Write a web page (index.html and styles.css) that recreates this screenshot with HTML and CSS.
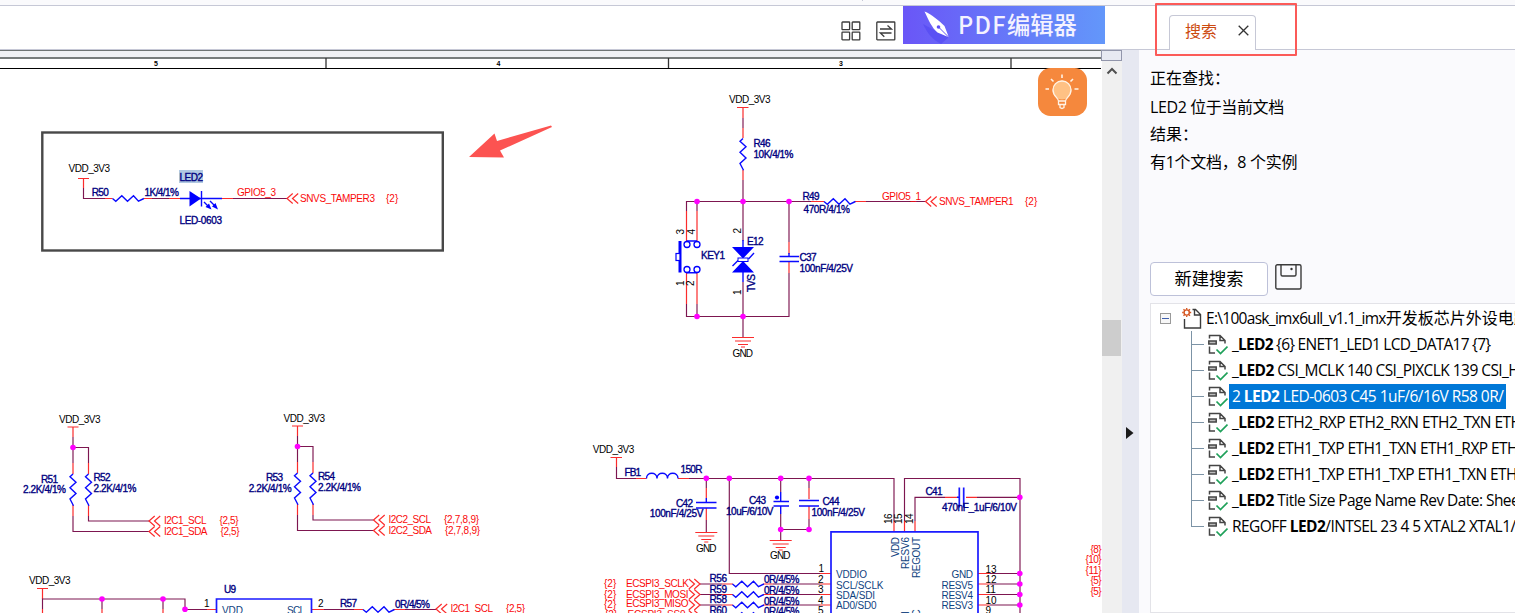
FILE: index.html
```html
<!DOCTYPE html>
<html lang="zh-CN">
<head>
<meta charset="utf-8">
<title>PDF</title>
<link rel="stylesheet" href="styles.css">
</head>
<body>
<div class="app">
  <div class="strip"><i class="strip-tick"></i></div>
  <header class="bar">
    <div class="tools">
      <svg class="tool" width="20" height="20" viewBox="0 0 20 20"><g fill="none" stroke="#3c3c3c" stroke-width="1.3"><rect x="1" y="1" width="7.6" height="7.6" rx=".6"/><rect x="11.2" y="1" width="7.6" height="7.6" rx=".6"/><rect x="1" y="11.2" width="7.6" height="7.6" rx=".6"/><rect x="11.2" y="11.2" width="7.6" height="7.6" rx=".6"/></g></svg>
      <svg class="tool" width="20" height="20" viewBox="0 0 20 20"><g fill="none" stroke="#3c3c3c" stroke-width="1.3"><rect x=".8" y="1" width="18" height="17.8" rx=".6"/><path d="M4 8H15.500L11.500 4.500M15.500 12H4.300L8.300 15.800"/></g></svg>
      <div class="banner">
        <svg width="55" height="38" viewBox="0 0 55 38"><path d="M20 18C24 27 30 34 38 38L46 31 34.500 26Z" fill="#4a3df0" opacity=".45"/><path d="M21.500 5.500C28 8 36 14.500 41.500 20L45.800 31.300 34.500 26.500C29 22 25 13 21.500 5.500Z" fill="#fff"/><path d="M35.500 21L45.500 31" stroke="#5f50f5" stroke-width="1"/><circle cx="35.500" cy="21" r="1.800" fill="#5f50f5"/></svg>
        <span class="ban-en">PDF</span><span class="ban-cn">编辑器</span>
      </div>
    </div>
    <div class="tab"><span>搜索</span><svg width="11" height="11" viewBox="0 0 11 11"><path d="M.7.7L10.300 10.300M10.300.7L.7 10.300" stroke="#333" stroke-width="1.300"/></svg></div>
    <div class="mark"></div>
  </header>
  <main class="main">
    <section class="doc">
<svg class="sheet" width="1102" height="563" viewBox="0 50 1102 563">
<defs>
  <path id="res" class="b" d="M0 0l3.300 2.700 6-5.500 5.700 5.500 6-5.500 5 5.500 5.400-2.700"/>
  <path id="resv" class="b" d="M0 0l-3 2.800 6 5.500-6 5.500 6 5.700-6 5.500 3.500 6.700"/>
  <path id="port" class="r" d="M5.700-5L0 0 5.700 5M11.200-5L5.500 0 11.200 5"/>
  <path id="portr" class="r" d="M-11.200-5L-5.500 0-11.200 5M-5.700-5L0 0-5.700 5"/>
  <path id="gnd" class="r" d="M-11 0H11M-8 3.500H8M-5 7H5M-2 9.500H2"/>
  <circle id="dot" r="2.800" fill="#f0f"/>
</defs>
<rect y="50" width="1102" height="563" fill="#fff"/>
<rect y="50" width="1102" height="8" fill="#f0f1f4"/>
<rect y="50" width="1102" height="1" fill="#6f7474"/><rect y="57" width="1102" height="2" fill="#787c7c"/>
<rect y="68" width="1101" height="1" fill="#000"/>
<path d="M326 58V68M668.500 58V68M1011 58V68" stroke="#333" stroke-width="1.300"/>
<g class="ruler"><text x="154" y="66">5</text><text x="496.500" y="66">4</text><text x="839" y="66">3</text></g>

<!-- LED2 block -->
<rect x="42.300" y="132.500" width="400.500" height="118" fill="none" stroke="#484848" stroke-width="2.400"/>
<rect x="179" y="170" width="24" height="13" fill="#b0c8e2"/>
<path class="r" d="M78 178.500H89M83.500 178.500V188M105 198.500H112.500M144 198.500H152M169 198.500H180M222 198.500H233"/>
<path class="w" d="M83.500 188V198.500H105M152 198.500H169M233 198.500H287"/>
<path class="b" d="M180 198.500H222M201.500 191V206.500M204 202L209 207M210 201L215 206"/>
<path d="M189.500 191L201 198.500 189.500 206.500ZM211.500 209.500L205.500 207 209 203.500ZM218 209.500L212 206.500 215.500 203Z" fill="#00f"/>
<use href="#res" x="112.500" y="198.500"/><use href="#port" x="287" y="198.500"/>
<path d="M469 157L494.500 133.500 497 141 551 125.500 552 127 500 150.500 504 157.500Z" fill="#fc5351"/>

<!-- Key block -->
<path class="r" d="M737 107.500H748.500M743 107.500V118M743 128V138M743 170V180M811 201.500H824M855 201.500H866M686.500 211V241M697 211V241M686.500 273V304M697 273V304M789 242V254M789 262V273"/>
<path class="w" d="M743 118V128M743 180V241M743 282V337M686.500 211V201.500H811M866 201.500H925M697 201.500V211M686.500 304V316.500H789V273M697 304V316.500M789 201.500V242"/>
<path class="b" d="M743 240V248M743 271V282M779.500 256.500H799M779.500 261.500H799M789 253V256M686.500 241H697M686.500 272.800H697M732.500 266L738 260.500M748.500 259L754 253"/>
<path d="M680 241V272.500" stroke="#00f" stroke-width="3"/><rect x="676" y="253.500" width="4" height="7" fill="#fff" stroke="#00f" stroke-width="1.200"/>
<g fill="none" stroke="#00f" stroke-width="1.300"><circle cx="687" cy="244.500" r="3"/><circle cx="697" cy="244.500" r="3"/><circle cx="687" cy="269.500" r="3"/><circle cx="697" cy="269.500" r="3"/></g>
<path d="M732 247H754L743 258.500ZM732 272.500H754L743 261Z" fill="#00f"/><rect x="738" y="258" width="10" height="3.500" fill="#fff" stroke="#00f"/>
<use href="#resv" x="743" y="138.500"/><use href="#res" x="824" y="201.500"/><use href="#port" x="925.500" y="201.500"/><use href="#gnd" x="743" y="337.500"/>
<use href="#dot" x="697" y="201.500"/><use href="#dot" x="743" y="201.500"/><use href="#dot" x="789" y="201.500"/><use href="#dot" x="697" y="316.500"/><use href="#dot" x="743" y="316.500"/>

<!-- I2C pull-ups -->
<g id="pull">
<path class="r" d="M67.500 427H78.500M73 427V437M73 463V474M88.500 463V474M73 505V516M88.500 505V516"/>
<path class="w" d="M73 437V463M73 447.500H88.500V463M73 516V531.500H149M88.500 516V521H149"/>
<use href="#resv" x="73" y="474"/><use href="#resv" x="88.500" y="474"/><use href="#port" x="149" y="521"/><use href="#port" x="149" y="531.500"/><use href="#dot" x="73" y="447.500"/>
</g>
<use href="#pull" x="224.500" y="-1"/>

<!-- U9 block -->
<path class="r" d="M37 588.500H48M42.500 588.500V599M42.500 609V613M102 609V613M163 609V613M207 609.500H216M312 609.500H324M354 609.500H363M394 609.500H405"/>
<path class="w" d="M42.500 609V599H185V609.500H207M102 599V609M163 599V609M324 609.500H354M405 609.500H436"/>
<path class="b2" d="M216.500 613V599H311.500V613"/>
<use href="#res" x="363" y="609.500"/><use href="#port" x="436" y="609"/>
<use href="#dot" x="102" y="599"/><use href="#dot" x="163" y="599"/><use href="#dot" x="185" y="609.300"/>

<!-- Sensor block -->
<path class="r" d="M610.500 457.500H622M616.500 457.500V467M636 478.500H646.500M678 478.500H689M706.300 488V498M706.300 508V520M809 488V499M809 506V519M894 521V532M904.500 521V532M915 521V532M945 497.300H957M966 497.300H977M722 584H733M722 594.500H733M722 605H733M763 584H773M763 594.500H773M763 605H773M820 573.500H831M820 584H831M820 594.500H831M820 605H831M978 573.500H990M978 584H990M978 594.500H990M978 605H990"/>
<path class="w" d="M616.500 467V478.500H636M689 478.500H894V521M706.300 478V488M706.300 520V532M729.300 478V573.500H820M780.700 478V492M780.700 514V540M809 478V488M809 519V529.500H780.700M904.500 521V478.500H1020V613M915 521V497.300H945M977 497.300H1020M700 584H722M700 594.500H722M700 605H722M773 584H820M773 594.500H820M773 605H820M990 573.500H1020M990 584H1020M990 594.500H1020M990 605H1020"/>
<path class="b" d="M646.500 478.500C646.500 471.500 657 471.500 657 478.500C657 471.500 667.500 471.500 667.500 478.500C667.500 471.500 678 471.500 678 478.500M706.300 498V502M696 502.500H716.500M696 508H716.500M780.700 492V501M773.500 501.500H789M773.500 506H789M780.700 506V514M799 500.500H819M799 506H819M957 497.300H959"/>
<path class="b2" d="M959.300 487.500V507.500M963.700 487.500V507.500M831 613V531.800H978V613"/>
<circle cx="777" cy="497.500" r="2.100" fill="#00f"/>
<use href="#gnd" x="706.300" y="532.500"/><use href="#gnd" x="780.700" y="540.500"/>
<use href="#res" x="732.500" y="584"/><use href="#res" x="732.500" y="594.500"/><use href="#res" x="732.500" y="605"/><use href="#res" x="732.500" y="615.500"/>
<use href="#portr" x="700" y="584"/><use href="#portr" x="700" y="594.500"/><use href="#portr" x="700" y="605"/><use href="#portr" x="700" y="615.500"/>
<use href="#dot" x="706.300" y="478.300"/><use href="#dot" x="729.300" y="478.300"/><use href="#dot" x="780.700" y="478.300"/><use href="#dot" x="809" y="478.300"/><use href="#dot" x="780.700" y="529.500"/><use href="#dot" x="809" y="529.500"/>
<use href="#dot" x="1019.800" y="497.300"/><use href="#dot" x="1019.800" y="573.500"/><use href="#dot" x="1019.800" y="584"/><use href="#dot" x="1019.800" y="594.500"/><use href="#dot" x="1019.800" y="605"/>

<g class="tk">
<text x="68.500" y="172" textLength="41.500">VDD_3V3</text><text x="729" y="103" textLength="41.500">VDD_3V3</text><text x="59" y="423" textLength="41.500">VDD_3V3</text><text x="283.500" y="422" textLength="41.500">VDD_3V3</text><text x="29" y="584" textLength="41.500">VDD_3V3</text><text x="592.800" y="453" textLength="41.500">VDD_3V3</text>
<text x="732.500" y="356.800" textLength="20.500">GND</text><text x="696" y="552" textLength="20.500">GND</text><text x="770" y="559" textLength="20.500">GND</text>
<text transform="translate(684 234.500)rotate(-90)">3</text><text transform="translate(694.500 234.500)rotate(-90)">4</text><text transform="translate(684 286)rotate(-90)">1</text><text transform="translate(694 286)rotate(-90)">2</text><text transform="translate(740.500 233.500)rotate(-90)">2</text><text transform="translate(740.500 295)rotate(-90)">1</text>
<text x="204" y="607">1</text><text x="318" y="607">2</text>
<text transform="translate(891.500 524)rotate(-90)" textLength="10.500">16</text><text transform="translate(902 524)rotate(-90)" textLength="10.500">15</text><text transform="translate(913 524)rotate(-90)" textLength="10.500">14</text>
<text x="818.500" y="572">1</text><text x="818" y="582.500">2</text><text x="818" y="593">3</text><text x="818" y="603.500">4</text><text x="818" y="613.500">5</text>
<text x="985.500" y="572.500">13</text><text x="985.500" y="582.500">12</text><text x="985.500" y="593">11</text><text x="985.500" y="603.500">10</text><text x="985.500" y="613.500">9</text>
</g>
<g class="tn">
<text x="91.700" y="195.700" textLength="17">R50</text><text x="144.500" y="196" textLength="34.500">1K/4/1%</text><text x="179.500" y="181" textLength="23.500">LED2</text><text x="179.500" y="224" textLength="42.500">LED-0603</text>
<text x="753.500" y="147" textLength="17">R46</text><text x="753.500" y="158" textLength="40">10K/4/1%</text><text x="802.500" y="200" textLength="17">R49</text><text x="803.500" y="213" textLength="46.500">470R/4/1%</text>
<text x="701" y="259" textLength="24">KEY1</text><text x="747" y="245" textLength="16.500">E12</text><text transform="translate(755 292)rotate(-90)" textLength="18">TVS</text><text x="799.500" y="261" textLength="17">C37</text><text x="799.500" y="272" textLength="53.500">100nF/4/25V</text>
<text x="41" y="483" textLength="17">R51</text><text x="23" y="492.700" textLength="43">2.2K/4/1%</text><text x="93.500" y="481" textLength="17">R52</text><text x="93.500" y="492" textLength="43">2.2K/4/1%</text>
<text x="266" y="481" textLength="17">R53</text><text x="248.700" y="492" textLength="43">2.2K/4/1%</text><text x="318" y="480" textLength="17">R54</text><text x="318" y="491" textLength="43">2.2K/4/1%</text>
<text x="224" y="593" textLength="12">U9</text><text x="340" y="607" textLength="17">R57</text><text x="395" y="607.500" textLength="35">0R/4/5%</text>
<text x="624.500" y="476" textLength="16.500">FB1</text><text x="680.500" y="473" textLength="22">150R</text><text x="676" y="507" textLength="17">C42</text><text x="649.800" y="517" textLength="53.500">100nF/4/25V</text><text x="749" y="504" textLength="17">C43</text><text x="726" y="515" textLength="47.500">10uF/6/10V</text><text x="822.500" y="505" textLength="17">C44</text><text x="811.500" y="516" textLength="53.500">100nF/4/25V</text><text x="925.500" y="495" textLength="17">C41</text><text x="942" y="511" textLength="75">470nF_1uF/6/10V</text>
<text x="709.500" y="582" textLength="17.500">R56</text><text x="709.500" y="592.700" textLength="17.500">R59</text><text x="709.500" y="603" textLength="17.500">R58</text><text x="709.500" y="613.500" textLength="17.500">R60</text>
<text x="764" y="583" textLength="35.500">0R/4/5%</text><text x="764" y="594" textLength="35.500">0R/4/5%</text><text x="764" y="604.500" textLength="35.500">0R/4/5%</text><text x="764" y="614.500" textLength="35.500">0R/4/5%</text>
</g>
<g class="tr">
<text x="237" y="196" textLength="39">GPIO5_3</text><text x="300" y="202" textLength="75">SNVS_TAMPER3</text><text x="386" y="202">{2}</text>
<text x="882" y="200" textLength="39">GPIO5_1</text><text x="939" y="205" textLength="74.500">SNVS_TAMPER1</text><text x="1025" y="205">{2}</text>
<text x="164" y="524" textLength="42.500">I2C1_SCL</text><text x="219.500" y="524" textLength="19">{2,5}</text><text x="164" y="535" textLength="43.500">I2C1_SDA</text><text x="220.500" y="535" textLength="19">{2,5}</text>
<text x="388.500" y="523" textLength="42.500">I2C2_SCL</text><text x="444" y="523" textLength="35">{2,7,8,9}</text><text x="388.500" y="534" textLength="43.500">I2C2_SDA</text><text x="445" y="534" textLength="35">{2,7,8,9}</text>
<text x="450.500" y="612" textLength="42.500">I2C1_SCL</text><text x="506" y="612" textLength="19">{2,5}</text>
<text x="604" y="587">{2}</text><text x="604" y="598">{2}</text><text x="604" y="607.500">{2}</text><text x="605" y="617.500">{2}</text>
<text x="626" y="587" textLength="63">ECSPI3_SCLK</text><text x="626" y="597.700" textLength="62.500">ECSPI3_MOSI</text><text x="626" y="607" textLength="62.500">ECSPI3_MISO</text><text x="627.500" y="617.500" textLength="58">ECSPI3_SS0</text>
<text x="1090.500" y="553" textLength="11">{8}</text><text x="1085.500" y="563" textLength="16">{10}</text><text x="1085.500" y="574" textLength="16">{11}</text><text x="1090.500" y="584" textLength="11">{5}</text><text x="1090.500" y="595" textLength="11">{5}</text>
</g>
<g class="tp">
<text x="222" y="613.500" textLength="21">VDD</text><text x="287" y="613.500" textLength="18">SCL</text>
<text transform="translate(898.500 557)rotate(-90)" textLength="20">VDD</text><text transform="translate(909 569)rotate(-90)" textLength="32">RESV6</text><text transform="translate(919.500 578)rotate(-90)" textLength="41">REGOUT</text>
<text x="836" y="578" textLength="31">VDDIO</text><text x="836" y="589" textLength="47.500">SCL/SCLK</text><text x="836" y="599" textLength="39">SDA/SDI</text><text x="836" y="609" textLength="40.500">AD0/SD0</text>
<text x="951.500" y="578" textLength="21.500">GND</text><text x="941.500" y="589" textLength="31.500">RESV5</text><text x="941.500" y="599" textLength="31.500">RESV4</text><text x="941.500" y="609" textLength="31.500">RESV3</text>
<text transform="translate(909 614)rotate(-90)">I</text><text transform="translate(919.500 616.500)rotate(-90)">C</text>
</g>

<!-- Hint button -->
<rect x="1038" y="68" width="49" height="48" rx="12.500" fill="#f5883d"/>
<circle cx="1062" cy="90" r="9.500" fill="#ffc184"/>
<g fill="none" stroke="#fff3e6" stroke-width="1.300"><path d="M1058.500 101C1058.500 98 1053 96.500 1053 90A9 9 0 0 1 1071 90C1071 96.500 1065.500 98 1065.500 101ZM1058.500 101V104.500H1065.500V101M1060 104.500V107.500L1062 108.500 1064 107.500V104.500"/><path d="M1062 74.500V78M1051 79L1053.500 81.500M1073 79L1070.500 81.500M1045.500 89H1049M1074.500 89H1078.500" stroke-width="1.600"/></g>
</svg>
    </section>
    <div class="scroll">
      <div class="corner"></div>
      <svg width="12" height="8" viewBox="0 0 12 8"><path d="M1.500 6.500L6 2 10.500 6.500" fill="none" stroke="#505050" stroke-width="2"/></svg>
      <div class="thumb"></div>
    </div>
    <div class="split"><svg width="8" height="12" viewBox="0 0 8 12"><path d="M0 0L7.500 6 0 12Z" fill="#1a1a1a"/></svg></div>
    <aside class="panel">
      <div class="info"><p>正在查找：</p><p class="scope">LED2 位于当前文档</p><p>结果：</p><p class="count">有1个文档，8 个实例</p></div>
      <div class="actions">
        <div class="btn">新建搜索</div>
        <svg width="27" height="26" viewBox="0 0 27 26"><g fill="none" stroke="#3b3b3b" stroke-width="1.400"><rect x=".8" y=".8" width="25.200" height="24.200" rx="1.500"/><path d="M6 1V10.500Q6 12 7.500 12H19.500Q21 12 21 10.500V1"/></g><circle cx="16.500" cy="5" r="1.200" fill="#333"/></svg>
      </div>
      <div class="tree">
        <div class="root"><span class="minus"></span>
          <svg width="20" height="21" viewBox="0 0 20 21"><g stroke="#d4541e" fill="none"><circle cx="4.700" cy="4.500" r="2.600" stroke-width="1.400"/><path d="M4.700 0V1.500M4.700 7.500V9M.2 4.500H1.700M7.700 4.500H9.200M1.500 1.300L2.500 2.300M7 6.800L8 7.800M8 1.300L7 2.300M2.500 6.800L1.500 7.800" stroke-width="1.300"/></g><path d="M2.500 11V20H18.500V6.500L13.500 1.500H10.500M12.500 1.500V7H18.500" fill="none" stroke="#3c3c3c" stroke-width="1.400"/></svg>
          <span class="path">E:\100ask_imx6ull_v1.1_imx<span class="han">开发板芯片外设电路图</span></span></div>
        <ul class="list">
          <li><svg><use href="#hit"/></svg><span class="t1">_<b>LED2</b> {6} ENET1_LED1 LCD_DATA17 {7}</span></li>
          <li><svg><use href="#hit"/></svg><span>_<b>LED2</b> CSI_MCLK 140 CSI_PIXCLK 139 CSI_HSYNC</span></li>
          <li><svg><use href="#hit"/></svg><span class="sel">2 <b>LED2</b> LED-0603 C45 1uF/6/16V R58 0R/</span></li>
          <li><svg><use href="#hit"/></svg><span>_<b>LED2</b> ETH2_RXP ETH2_RXN ETH2_TXN ETH2_TXP</span></li>
          <li><svg><use href="#hit"/></svg><span>_<b>LED2</b> ETH1_TXP ETH1_TXN ETH1_RXP ETH1_RXN</span></li>
          <li><svg><use href="#hit"/></svg><span>_<b>LED2</b> ETH1_TXP ETH1_TXP ETH1_TXN ETH1_TXN</span></li>
          <li><svg><use href="#hit"/></svg><span>_<b>LED2</b> Title Size Page Name Rev Date: Sheet of</span></li>
          <li><svg><use href="#hit"/></svg><span>REGOFF <b>LED2</b>/INTSEL 23 4 5 XTAL2 XTAL1/CLKIN</span></li>
        </ul>
      </div>
    </aside>
  </main>
</div>
<svg class="defs"><defs><g id="hit" fill="none" stroke="#454545" stroke-width="1.500"><path d="M1.500 4.500V1.500H12L17 6.500V9.500M12 1.500V6.500H17"/><rect x=".8" y="7" width="7.400" height="3" fill="#bbb"/><path d="M1.500 12.500V19H7"/><path d="M8.500 15.500L12.500 19.500 19.500 12.500" stroke="#1fa15a" stroke-width="1.700"/></g></defs></svg>
</body>
</html>
```
FILE: styles.css
```css
* { box-sizing: border-box; }
body { margin: 0; background: #fff; font-family: "Noto Sans", "Noto Sans CJK SC", sans-serif; font-size: 16px; color: #000; }
.app { width: 1515px; height: 613px; overflow: hidden; display: flex; flex-direction: column; }
.strip { height: 6px; background: #fafafc; border-bottom: 1px solid #c6c8d6; padding-left: 862px; flex: none; }
.strip-tick { display: block; width: 1px; height: 1px; background: #c6c8d6; }
.bar { position: relative; height: 44px; flex: none; display: flex; border-bottom: 1px solid #c6c8d6; background: #fff; }
.tools { width: 1169px; padding-left: 841px; display: flex; align-items: flex-start; flex: none; }
.tool { margin: 15px 15px 0 0; flex: none; }
.banner { width: 202px; height: 38px; margin-left: -8px; display: flex; align-items: center; background: linear-gradient(90deg, #6a56f7, #6397fa); color: #f4f2ff; font-family: "Noto Sans CJK SC", sans-serif; white-space: nowrap; }
.banner span { padding-bottom: 3px; }
.ban-en { width: 49px; font-size: 23.500px; font-weight: 500; letter-spacing: 1.300px; }
.ban-cn { font-size: 23.300px; font-weight: 500; }
.tab { width: 87px; height: 35px; margin-top: 9px; padding: 0 6px 6px 15px; display: flex; align-items: center; justify-content: space-between; border: 1px solid #c6c8d6; border-bottom: 0; border-radius: 4px 4px 0 0; background: #fff; color: #cc4a10; font-family: "Noto Sans CJK SC", sans-serif; flex: none; }
.mark { position: absolute; left: 1155px; top: -3px; width: 142px; height: 53px; border: 2px solid #fb5a58; border-radius: 1px; z-index: 2; }
.main { flex: 1; display: flex; min-height: 0; }
.doc { width: 1102px; flex: none; overflow: hidden; }
.sheet { display: block; font-family: "Liberation Sans", Arial, sans-serif; font-size: 10px; }
.r { fill: none; stroke: #fb2c2c; stroke-width: 1.200; }
.w { fill: none; stroke: #7d1650; stroke-width: 1.150; }
.b { fill: none; stroke: #0a0aff; stroke-width: 1.400; }
.b2 { fill: none; stroke: #1a1aff; stroke-width: 1.700; }
.tk { fill: #000; }
.tn { fill: #000080; stroke: #000080; stroke-width: .35; }
.tr { fill: #fa0a0a; }
.tp { fill: #0f4280; }
.ruler { font-size: 7px; font-weight: 700; }
.scroll { width: 20px; flex: none; background: #f0f0f0; display: flex; flex-direction: column; align-items: center; }
.corner { width: 21px; height: 11px; margin: 0 0 6px -1px; border: 1px solid #9296ab; background: #e7e9f2; }
.thumb { width: 19px; height: 36px; margin: 245px 1px 0 0; background: #cdcdcd; }
.split { width: 17px; flex: none; background: #e6e8f1; padding: 372px 0 0 4px; }
.panel { width: 376px; flex: none; background: #fafafd; padding: 14px 0 0 11px; display: flex; flex-direction: column; overflow: hidden; }
.info { height: 198px; flex: none; }
.info p { margin: 0; height: 28px; line-height: 28px; font-family: "Open Sans", "Noto Sans CJK SC", sans-serif; }
.info .scope { letter-spacing: -.4px; padding-top: 1px; }
.info .count { letter-spacing: -.3px; }
.actions { display: flex; align-items: flex-start; gap: 7px; height: 41px; flex: none; }
.actions svg { margin-top: 2px; }
.btn { width: 118px; height: 34px; border: 1px solid #bdc1d9; border-radius: 4px; background: #fff; font-size: 17.300px; line-height: 32px; text-align: center; }
.tree { flex: 1; border: 1px solid #e3e3e8; border-right: 0; background: #fff; padding: 1px 0 0 9px; white-space: nowrap; font-family: "Open Sans", "Noto Sans CJK SC", sans-serif; font-size: 15.500px; letter-spacing: -.55px; }
.root { height: 26px; display: flex; align-items: center; }
.root svg { margin: 0 4px 0 11px; flex: none; }
.minus { width: 11px; height: 11px; flex: none; border: 1px solid #999; background: linear-gradient(#3f5fae, #3f5fae) center / 7px 1px no-repeat #f7f7f7; }
.path { font-size: 15.500px; letter-spacing: -.7px; padding-bottom: 2px; }
.han { font-size: 16px; letter-spacing: 0; }
.list { margin: 0 0 0 31px; padding: 0; list-style: none; }
.list li { height: 26px; display: flex; align-items: center; background: linear-gradient(#7c93a6, #7c93a6) 0 0 / 1px 26px no-repeat, linear-gradient(#7c93a6, #7c93a6) 0 13px / 13px 1px no-repeat; }
.list li:last-child { background-size: 1px 13px, 13px 1px; }
.list svg { width: 20px; height: 21px; margin: 0 1px 0 17px; flex: none; }
.list span { height: 25px; line-height: 24px; padding: 0 3px; }
.list .t1 { letter-spacing: -.75px; }
.list .sel { background: #0078d7; color: #fff; }
.defs { position: absolute; width: 0; height: 0; }
```
